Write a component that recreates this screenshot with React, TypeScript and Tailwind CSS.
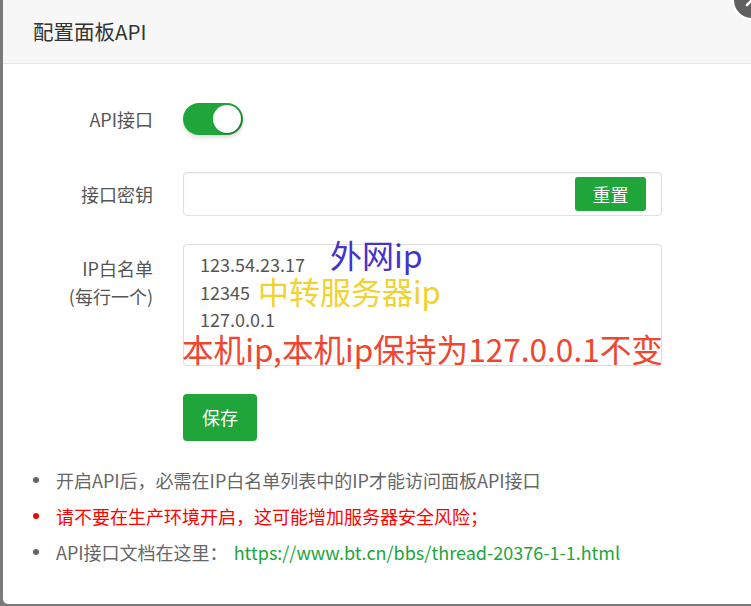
import { X } from "lucide-react";

const FONT = { fontFamily: '"Noto Sans CJK SC", "Noto Sans", sans-serif' };

function Row({ label, children, top = false }: { label: React.ReactNode; children: React.ReactNode; top?: boolean }) {
  return (
    <div className={`flex ${top ? "items-start" : "items-center"}`}>
      <div className={`w-[150px] shrink-0 text-right text-[18px] text-[#555] leading-[28px] ${top ? "pt-[10px]" : ""}`}>
        {label}
      </div>
      <div className="ml-[30px]">{children}</div>
    </div>
  );
}

export default function App() {
  return (
    <div className="relative h-[606px] w-[751px] overflow-hidden bg-[#7a7a7a]" style={FONT}>
      <div className="ml-[3px] h-[604px] overflow-hidden rounded-bl-[5px] bg-white">
        <header className="flex h-[64px] items-center border-b border-[#e6e6e6] bg-[#f7f7f7] pl-[30px]">
          <h1 className="text-[20.5px] text-[#333]">配置面板API</h1>
        </header>

        <div className="flex flex-col pt-[39px]">
          <Row label="API接口">
            <div className="relative h-[32px] w-[60px] rounded-full bg-[#20a53a] shadow-[0_3px_4px_rgba(0,0,0,0.12)]">
              <div className="absolute right-[2px] top-[2px] h-[28px] w-[28px] rounded-full bg-white shadow-[1px_1px_2px_rgba(0,0,0,0.35)]" />
            </div>
          </Row>

          <div className="mt-[37px]">
            <Row label="接口密钥">
              <div className="flex h-[44px] w-[479px] items-center justify-end rounded-[4px] border border-[#e0e0e0] pr-[15px] shadow-[inset_0_1px_2px_rgba(0,0,0,0.06)]">
                <button className="h-[34px] w-[71px] rounded-[3px] bg-[#20a53a] text-[18px] text-white">重置</button>
              </div>
            </Row>
          </div>

          <div className="mt-[28px]">
            <Row
              top
              label={
                <>
                  <div>IP白名单</div>
                  <div>(每行一个)</div>
                </>
              }
            >
              <div className="relative">
                <div className="h-[122px] w-[479px] rounded-[4px] border border-[#dcdcdc] px-[16px] pt-[6px] text-[18px] leading-[27.5px] text-[#555]">
                  <div>123.54.23.17</div>
                  <div>12345</div>
                  <div>127.0.0.1</div>
                </div>
                <span className="absolute left-[147px] top-[-10px] text-[32px] leading-[40px] text-[#4433cc]">外网ip</span>
                <span className="absolute left-[75px] top-[27px] text-[31px] leading-[40px] text-[#f2d22e]">中转服务器ip</span>
                <span className="absolute left-[-1px] top-[84px] whitespace-nowrap text-[31.6px] leading-[40px] text-[#f0452e]">
                  本机ip,本机ip保持为127.0.0.1不变
                </span>
              </div>
            </Row>
          </div>

          <div className="mt-[28px] pl-[180px]">
            <button className="h-[47px] w-[74px] rounded-[4px] bg-[#20a53a] text-[18px] text-white">保存</button>
          </div>

          <ul className="mt-[25px] flex flex-col gap-[8px] pl-[30px] text-[18px] leading-[28px]">
            <li className="flex items-center text-[#666]">
              <span className="mr-[17px] h-[6px] w-[6px] rounded-full bg-[#666]" />
              开启API后，必需在IP白名单列表中的IP才能访问面板API接口
            </li>
            <li className="flex items-center text-[#ff0000]">
              <span className="mr-[17px] h-[6px] w-[6px] rounded-full bg-[#ff0000]" />
              请不要在生产环境开启，这可能增加服务器安全风险；
            </li>
            <li className="flex items-center text-[#666]">
              <span className="mr-[17px] h-[6px] w-[6px] rounded-full bg-[#666]" />
              API接口文档在这里：
              <a className="ml-[6px] text-[#20a53a]" href="#">https://www.bt.cn/bbs/thread-20376-1-1.html</a>
            </li>
          </ul>
        </div>
      </div>

      <div className="absolute left-[732px] top-[-20px] flex h-[40px] w-[40px] items-center justify-center rounded-full border-2 border-white bg-[#606060]">
        <X className="h-[20px] w-[20px] text-white" strokeWidth={3} />
      </div>
    </div>
  );
}
